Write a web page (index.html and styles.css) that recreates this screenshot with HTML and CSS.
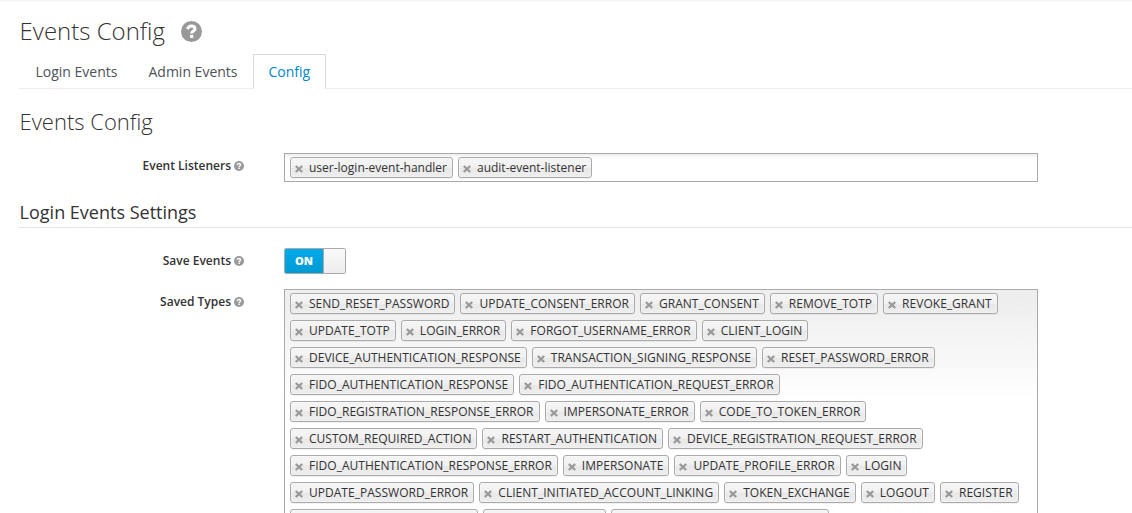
FILE: index.html
```
<!DOCTYPE html>
<html lang="en">
<head>
<meta charset="utf-8">
<title>Events Config</title>
<link rel="stylesheet" href="styles.css">
</head>
<body>
<svg class="defs" width="0" height="0">
  <symbol id="help" viewBox="0 0 20 20"><circle cx="10" cy="10" r="10" fill="currentColor"/><path d="M6 7.6C7 5.6 8.2 4.8 9.9 4.8c2 0 3.4 1 3.4 2.7 0 2.2-3.1 2-3.1 4.4" fill="none" stroke="#fff" stroke-width="2.9"/><path d="M8.7 13.2h3v3h-3z" fill="#fff"/></symbol>
  <symbol id="close" viewBox="0 0 8 8"><path d="M.8 1l6.4 6M7.2 1L.8 7" fill="none" stroke="currentColor" stroke-width="2.3"/></symbol>
</svg>
<main class="page">
  <h1 class="title">Events Config <svg class="help-lg"><use href="#help"/></svg></h1>
  <nav class="tabs"><a class="tab">Login Events</a><a class="tab">Admin Events</a><a class="tab active">Config</a></nav>
  <h2 class="subtitle">Events Config</h2>
  <div class="row listeners">
    <label class="label">Event Listeners <svg class="help"><use href="#help"/></svg></label>
    <ul class="select" id="listeners"></ul>
  </div>
  <h3 class="legend">Login Events Settings</h3>
  <div class="row save">
    <label class="label">Save Events <svg class="help"><use href="#help"/></svg></label>
    <div class="switch"><span class="on">ON</span><span class="knob"></span></div>
  </div>
  <div class="row types">
    <label class="label">Saved Types <svg class="help"><use href="#help"/></svg></label>
    <ul class="select tall" id="types"></ul>
  </div>
</main>
<script src="tags.js"></script>
</body>
</html>
```
FILE: styles.css
```
* { box-sizing: border-box; }
html, body { height: 100%; }
body { margin: 0; overflow: hidden; background: #fff; color: #333; font: 12px/20px "Open Sans", sans-serif; }
.defs { display: block; height: 0; }
.page { height: 513px; overflow: hidden; border-top: 2px solid #f5f5f5; padding-left: 19px; }
.title { display: flex; align-items: center; gap: 16px; margin: 15px 0 0; padding-left: 0.6px; height: 28px; font-size: 24px; font-weight: 300; line-height: 28px; }
.help-lg { width: 21px; height: 21px; color: #999; }
.tabs { display: flex; align-items: flex-end; height: 35px; margin-top: 9px; padding-left: 1px; border-bottom: 1px solid #ededed; font-size: 14px; }
.tab { height: 35px; padding: 7px 14.5px 0; border: 1px solid transparent; color: #4d5258; line-height: 20px; margin-bottom: -1px; }
.tab.active { border-color: #d8d8d8; border-bottom-color: #fff; color: #0088ce; background: #fff; }
.subtitle { margin: 18px 0 0; padding-left: 0.6px; font-size: 22px; font-weight: 300; line-height: 28px; }
.row { display: flex; }
.label { display: flex; align-items: center; justify-content: flex-end; gap: 3px; width: 225px; height: 20px; margin-right: 40px; font-weight: 600; }
.help { width: 10px; height: 10px; color: #999; }
.listeners { margin-top: 18px; }
.listeners .label { margin-top: 3px; }
.select { display: flex; flex-wrap: wrap; align-content: flex-start; width: 754px; height: 29px; margin: 0; padding: 0; list-style: none; border: 1px solid #aaa; background: linear-gradient(#eee 1%, #fff 15%); }
.tall { height: 750px; padding-right: 10px; }
.tag { display: flex; align-items: center; height: 21px; margin: 3px 0 3px 5px; padding: 0 5px 0 4px; border: 1px solid #aaa; border-radius: 3px; background: linear-gradient(#f4f4f4 20%, #f0f0f0 50%, #e8e8e8 52%, #eee); box-shadow: 0 0 2px #fff inset, 0 1px 0 rgba(0,0,0,.05); line-height: 13px; white-space: nowrap; }
.tall .tag { letter-spacing: 0.025px; }
.x { flex: none; width: 8px; height: 8px; margin: 3px 6px 0 0; color: #999; }
.legend { height: 29px; margin: 17px 0 0; padding-left: 0.6px; border-bottom: 1px solid #e5e5e5; font-size: 18px; font-weight: 400; line-height: 26px; }
.save { margin-top: 20px; }
.save .label { margin-top: 3px; }
.switch { display: flex; width: 62px; height: 26px; border: 1px solid #aaa; border-radius: 2px; overflow: hidden; }
.on { width: 38px; background: linear-gradient(#00a9ec, #009bd3); color: #fff; font-size: 11px; font-weight: 800; line-height: 24px; text-align: center; }
.knob { flex: 1; border-left: 1px solid #aaa; background: linear-gradient(#fafafa, #ededed); }
.types { margin-top: 15px; }
.types .label { margin-top: 3px; }
```
FILE: tags.js
```
const listeners = ["user-login-event-handler", "audit-event-listener"];
const types = `SEND_RESET_PASSWORD UPDATE_CONSENT_ERROR GRANT_CONSENT REMOVE_TOTP REVOKE_GRANT
UPDATE_TOTP LOGIN_ERROR FORGOT_USERNAME_ERROR CLIENT_LOGIN
DEVICE_AUTHENTICATION_RESPONSE TRANSACTION_SIGNING_RESPONSE RESET_PASSWORD_ERROR
FIDO_AUTHENTICATION_RESPONSE FIDO_AUTHENTICATION_REQUEST_ERROR
FIDO_REGISTRATION_RESPONSE_ERROR IMPERSONATE_ERROR CODE_TO_TOKEN_ERROR
CUSTOM_REQUIRED_ACTION RESTART_AUTHENTICATION DEVICE_REGISTRATION_REQUEST_ERROR
FIDO_AUTHENTICATION_RESPONSE_ERROR IMPERSONATE UPDATE_PROFILE_ERROR LOGIN
UPDATE_PASSWORD_ERROR CLIENT_INITIATED_ACCOUNT_LINKING TOKEN_EXCHANGE LOGOUT REGISTER`.split(/\s+/);
const clippedWidths = [188, 123, 218];

function addTag(list, text, width) {
  const li = document.createElement("li");
  li.className = "tag";
  if (width) li.style.width = width + "px";
  else li.innerHTML = '<svg class="x"><use href="#close"/></svg>' + text;
  list.append(li);
}

const listenerBox = document.getElementById("listeners");
const typeBox = document.getElementById("types");
listeners.forEach(t => addTag(listenerBox, t));
types.forEach(t => addTag(typeBox, t));
clippedWidths.forEach(w => addTag(typeBox, "", w));
```
